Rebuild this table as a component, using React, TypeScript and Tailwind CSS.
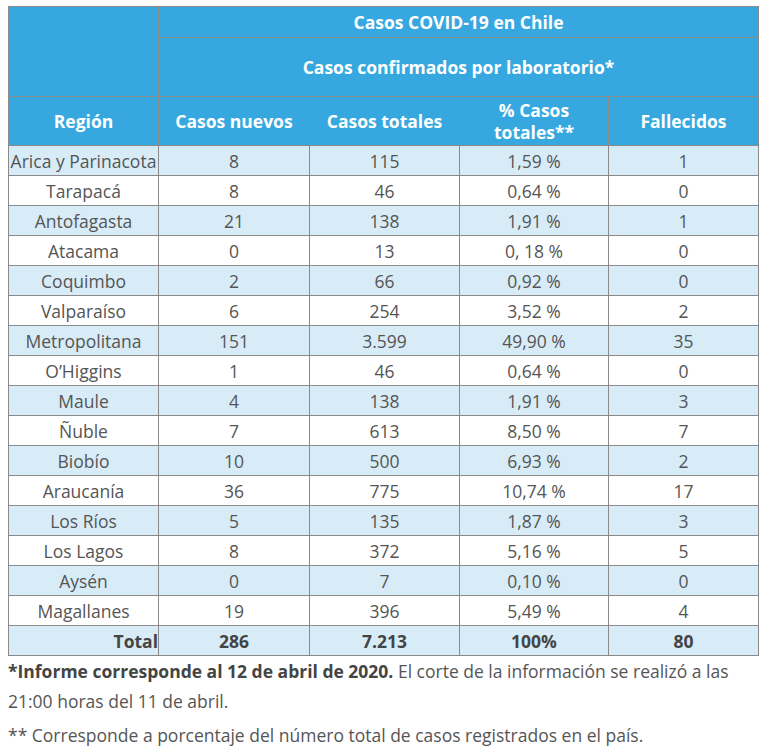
const rows: [string, string, string, string, string][] = [
  ["Arica y Parinacota", "8", "115", "1,59 %", "1"],
  ["Tarapacá", "8", "46", "0,64 %", "0"],
  ["Antofagasta", "21", "138", "1,91 %", "1"],
  ["Atacama", "0", "13", "0, 18 %", "0"],
  ["Coquimbo", "2", "66", "0,92 %", "0"],
  ["Valparaíso", "6", "254", "3,52 %", "2"],
  ["Metropolitana", "151", "3.599", "49,90 %", "35"],
  ["O’Higgins", "1", "46", "0,64 %", "0"],
  ["Maule", "4", "138", "1,91 %", "3"],
  ["Ñuble", "7", "613", "8,50 %", "7"],
  ["Biobío", "10", "500", "6,93 %", "2"],
  ["Araucanía", "36", "775", "10,74 %", "17"],
  ["Los Ríos", "5", "135", "1,87 %", "3"],
  ["Los Lagos", "8", "372", "5,16 %", "5"],
  ["Aysén", "0", "7", "0,10 %", "0"],
  ["Magallanes", "19", "396", "5,49 %", "4"],
];

const th = "border border-[#8a8a8a] font-bold text-white text-center leading-[22px] p-0";
const td = "border border-[#8a8a8a] text-center h-[30px] p-0 leading-[22px] whitespace-nowrap";

export default function App() {
  return (
    <div className="bg-white min-h-[752px] w-[775px] pl-2 pt-[6px] text-[#555] font-['Open_Sans',sans-serif] text-[17.5px]">
      <table className="table-fixed border-collapse w-[750px] border border-[#1d3646]">
        <colgroup>
          <col className="w-[150px]" />
          <col className="w-[151px]" />
          <col className="w-[150px]" />
          <col className="w-[149px]" />
          <col className="w-[150px]" />
        </colgroup>
        <thead className="bg-[#36a8df]">
          <tr className="h-[31px]">
            <th rowSpan={2} className={th}></th>
            <th colSpan={4} className={th}>Casos COVID-19 en Chile</th>
          </tr>
          <tr className="h-[59px]">
            <th colSpan={4} className={th}>Casos confirmados por laboratorio*</th>
          </tr>
          <tr className="h-[49px]">
            <th className={th}>Región</th>
            <th className={th}>Casos nuevos</th>
            <th className={th}>Casos totales</th>
            <th className={th}>
              % Casos
              <br />
              totales**
            </th>
            <th className={th}>Fallecidos</th>
          </tr>
        </thead>
        <tbody>
          {rows.map((r, i) => (
            <tr key={r[0]} className={i % 2 === 0 ? "bg-[#d8ecf8]" : "bg-white"}>
              {r.map((c, j) => (
                <td key={j} className={td}>
                  {c}
                </td>
              ))}
            </tr>
          ))}
          <tr className="bg-[#d8ecf8] font-bold text-[#444]">
            <td className={`${td} text-right`}>Total</td>
            <td className={td}>286</td>
            <td className={td}>7.213</td>
            <td className={td}>100%</td>
            <td className={td}>80</td>
          </tr>
        </tbody>
      </table>
      <div className="w-[750px] leading-[30px]">
        <p>
          <b className="text-[#444]">*Informe corresponde al 12 de abril de 2020.</b> El corte de la información se
          realizó a las 21:00 horas del 11 de abril.
        </p>
        <p className="mt-1">** Corresponde a porcentaje del número total de casos registrados en el país.</p>
      </div>
    </div>
  );
}
